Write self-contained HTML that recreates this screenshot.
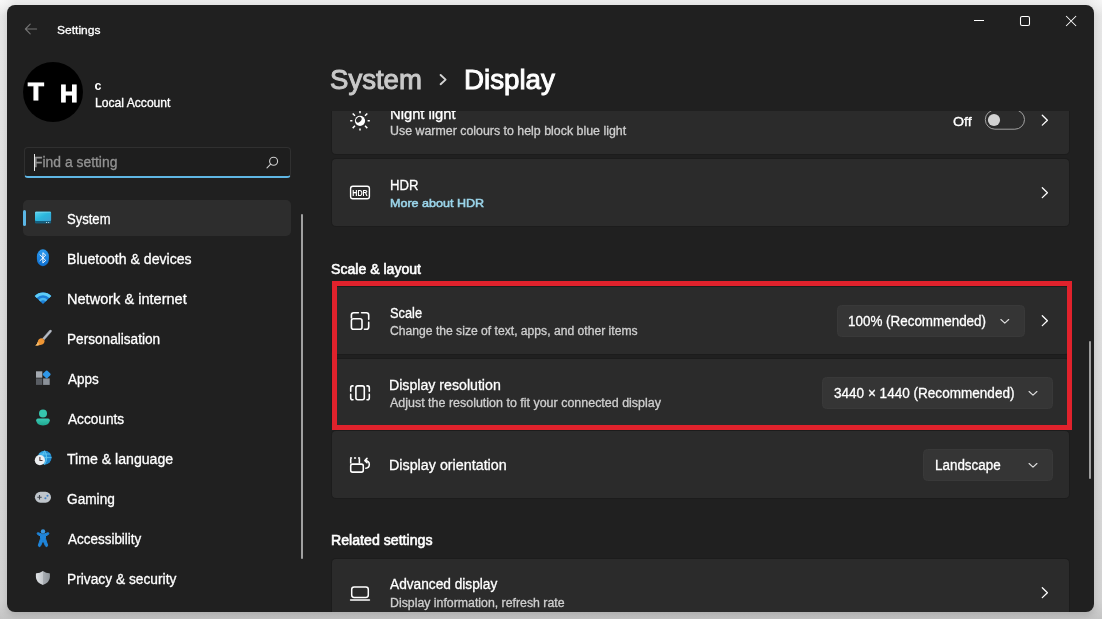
<!DOCTYPE html>
<html lang="en">
<head>
<meta charset="utf-8">
<title>Settings - System - Display</title>
<style>
*{box-sizing:border-box;margin:0;padding:0}
html,body{width:1102px;height:619px;overflow:hidden}
body{position:relative;background:radial-gradient(circle at 0 0,#f8f8f8 0,rgba(248,248,248,0) 16px),radial-gradient(circle at 100% 0,#f6f6f6 0,rgba(246,246,246,0) 16px),linear-gradient(180deg,#ebebeb 0,#e6e6e6 1%,#dedede 50%,#d2d2d2 97%,#c4c4c4 100%);font-family:"Liberation Sans",sans-serif;color:#fff}
#win{position:absolute;left:7px;top:5px;width:1087px;height:606.6px;background:#202020;border-radius:8px;overflow:hidden;box-shadow:0 4px 7px 0 rgba(0,0,0,.13)}
#page{position:absolute;left:-7px;top:-5px;width:1102px;height:619px;will-change:transform}
.t{position:absolute;white-space:pre;transform-origin:0 50%;font-family:"Liberation Sans",sans-serif}
.abs{position:absolute}
.card{position:absolute;left:332px;width:737px;height:66.6px;background:#2b2b2b;box-shadow:0 0 0 1px #1c1c1c;border-radius:4px}
.dd{position:absolute;height:32px;background:#353535;border:1px solid #393939;border-radius:4.5px}
#clip{position:absolute;left:320px;top:111px;width:782px;height:508px;overflow:hidden}
#clipin{position:absolute;left:-320px;top:-111px;width:1102px;height:619px}
svg{position:absolute;overflow:visible}
</style>
</head>
<body>
<div id="win"><div id="page">

<!-- title bar -->
<svg style="left:24px;top:23px" width="14" height="12" viewBox="0 0 14 12"><path d="M6.2 1.2 L1.4 6 L6.2 10.8 M1.6 6 H12.6" fill="none" stroke="#747474" stroke-width="1.1" stroke-linecap="round" stroke-linejoin="round"/></svg>
<svg style="left:0;top:0" width="1102" height="40" viewBox="0 0 1102 40" fill="none" stroke="#fff" stroke-width="1.05">
 <path d="M974 20.5 H984"/>
 <rect x="1020.5" y="16.5" width="9" height="9" rx="1.6"/>
 <path d="M1066.1 16 L1076.1 26 M1076.1 16 L1066.1 26"/>
</svg>

<!-- user -->
<div class="abs" style="left:22.5px;top:62px;width:60px;height:60px;border-radius:50%;background:#000"></div>
<span class="t" style="left:28px;top:78.1px;font-size:23.6px;line-height:28px;font-weight:700;color:#fff;-webkit-text-stroke:1px #fff;transform:scaleX(1.1)">T</span>
<span class="t" style="left:59.8px;top:80.4px;font-size:23.6px;line-height:28px;font-weight:700;color:#fff;-webkit-text-stroke:1px #fff;transform:scaleX(1.04)">H</span>

<!-- search -->
<div class="abs" style="left:23.5px;top:147px;width:267px;height:31px;border-radius:4px;background:#1e1e1e;border:1px solid #303030;border-bottom:2px solid #5fb6e4"></div>
<div class="abs" style="left:34px;top:154px;width:1px;height:17px;background:#e8e8e8"></div>
<svg style="left:266.2px;top:155.6px" width="13" height="13" viewBox="0 0 13 13"><circle cx="7.6" cy="5.2" r="4" fill="none" stroke="#cfcfcf" stroke-width="1.1"/><path d="M4.7 8.1 L1 11.8" stroke="#cfcfcf" stroke-width="1.1" stroke-linecap="round"/></svg>

<!-- nav -->
<div class="abs" style="left:23px;top:200px;width:268px;height:36px;border-radius:5px;background:#2d2d2d"></div>
<div class="abs" style="left:23px;top:210px;width:3px;height:16px;border-radius:2px;background:#5bb7e6"></div>
<div class="abs" style="left:301px;top:214px;width:2.2px;height:344.5px;border-radius:1px;background:#a0a0a0"></div>
<svg style="left:0;top:0" width="70" height="619" viewBox="0 0 70 619">
<defs>
 <linearGradient id="gSys" x1="0" y1="0" x2="1" y2="1"><stop offset="0" stop-color="#5ed2ee"/><stop offset=".5" stop-color="#2bb7dd"/><stop offset="1" stop-color="#3b9fd2"/></linearGradient>
 <linearGradient id="gBt" x1="0" y1="0" x2="0" y2="1"><stop offset="0" stop-color="#2a9af0"/><stop offset="1" stop-color="#0f6fd0"/></linearGradient>
 <linearGradient id="gAcc" x1="0" y1="0" x2="0" y2="1"><stop offset="0" stop-color="#3cc9b4"/><stop offset="1" stop-color="#1ea890"/></linearGradient>
 <linearGradient id="gSh" x1="0" y1="0" x2="1" y2="0"><stop offset="0" stop-color="#e0e3e6"/><stop offset=".5" stop-color="#c4c8cc"/><stop offset=".5" stop-color="#a9aeb3"/><stop offset="1" stop-color="#8f959b"/></linearGradient>
 <linearGradient id="gBr" x1="1" y1="0" x2="0" y2="1"><stop offset="0" stop-color="#b8bcc2"/><stop offset="1" stop-color="#7d8288"/></linearGradient>
</defs>
<!-- System -->
<rect x="35" y="211.7" width="16.1" height="11.8" rx="1.2" fill="#175f7e"/>
<rect x="35" y="211.7" width="16.1" height="9.3" rx="1" fill="url(#gSys)"/>
<rect x="35.3" y="211.7" width="15.5" height=".9" rx=".4" fill="#8fe2f6" opacity=".8"/>
<rect x="46" y="221.9" width="1.1" height="1.1" rx=".5" fill="#d8f2fb"/><rect x="48.1" y="221.9" width="1.1" height="1.1" rx=".5" fill="#d8f2fb"/>
<!-- Bluetooth -->
<rect x="36.9" y="249.3" width="12" height="16.9" rx="6" ry="7.2" fill="url(#gBt)"/>
<path d="M40 254.9 L45.7 260.4 L42.9 262.9 V252.7 L45.7 255.2 L40 260.7" fill="none" stroke="#fff" stroke-width=".95" stroke-linejoin="miter" stroke-linecap="round"/>
<!-- Network -->
<path d="M43 304 L34.7 295.9 A11.8 11.8 0 0 1 51.3 295.9 Z" fill="#1c7fd6"/>
<path d="M34.7 295.9 A11.8 11.8 0 0 1 51.3 295.9 L49.3 297.9 A9 9 0 0 0 36.7 297.9 Z" fill="#5fcdf6"/>
<path d="M38.6 299.7 A6.2 6.2 0 0 1 47.4 299.7 L45.6 301.5 A3.7 3.7 0 0 0 40.4 301.5 Z" fill="#49b6ee"/>
<!-- Personalisation -->
<path d="M50.4 331.2 L43.4 339.2" stroke="#a3a9b3" stroke-width="2.7" stroke-linecap="round" fill="none"/>
<path d="M50.9 330.7 L43.9 338.7" stroke="#c2c7cf" stroke-width=".9" stroke-linecap="round" fill="none"/>
<path d="M41.6 338.3 Q44 338.6 44.6 341 Q44.4 344.6 40.4 345 Q37.4 345.6 35.3 345.5 Q37.6 344 37.8 341.8 Q38.2 338.4 41.6 338.3 Z" fill="#ef9634"/>
<path d="M35.3 345.5 Q37.6 344 37.8 341.8 Q39.4 343.6 38.6 345.3 Q36.8 345.7 35.3 345.5Z" fill="#f8c377"/>
<path d="M42.4 338.4 Q44.3 339 44.6 341 L42.2 338.4Z" fill="#b8641c"/>
<!-- Apps -->
<rect x="36" y="371.3" width="6.3" height="6.4" fill="#a4aab1"/>
<rect x="36" y="378.4" width="6.3" height="6.5" fill="#595d63"/>
<rect x="43.1" y="378.4" width="6.6" height="6.5" fill="#8b9199"/>
<rect x="43.6" y="371.3" width="6.2" height="6.2" rx="1.1" transform="rotate(45 46.7 374.4)" fill="#2f97e8"/>
<!-- Accounts -->
<circle cx="43" cy="413.6" r="4" fill="#36c5ae"/>
<path d="M37.9 418.6 H48.1 Q49.8 418.6 49.8 420.3 Q49.8 425.4 43 425.4 Q36.2 425.4 36.2 420.3 Q36.2 418.6 37.9 418.6Z" fill="url(#gAcc)"/>
<!-- Time & language -->
<circle cx="44.6" cy="457.6" r="6.9" fill="#2a9fe0"/>
<path d="M44.6 450.7 A6.9 6.9 0 0 1 44.6 464.5 Q50 457.6 44.6 450.7Z" fill="#1c7fc4" opacity=".7"/>
<path d="M44.6 450.7 Q40.4 457.6 44.6 464.5 M44.6 450.7 Q48.8 457.6 44.6 464.5 M37.7 457.6 H51.5 M38.8 454 H50.4" fill="none" stroke="#6fd0f4" stroke-width=".7"/>
<circle cx="39.9" cy="460.2" r="5.1" fill="#eceef0"/>
<path d="M39.9 457.3 V460.5 H42.1" fill="none" stroke="#4a3434" stroke-width="1.1" stroke-linecap="round" stroke-linejoin="round"/>
<!-- Gaming -->
<rect x="34.9" y="491.8" width="16.1" height="10.9" rx="5.45" fill="#bfc5cb"/>
<path d="M39.5 495 V499.4 M37.3 497.2 H41.7" stroke="#3f454d" stroke-width="1.1"/>
<circle cx="45.4" cy="498.3" r="1.05" fill="#3f7fc4"/><circle cx="47.5" cy="495.8" r="1.05" fill="#3f7fc4"/>
<!-- Accessibility -->
<circle cx="43" cy="531.5" r="2.2" fill="#3a98e2"/>
<g transform="translate(0.3 0.3)"><path d="M36.9 533.4 Q36.6 532.2 37.9 532.4 L42.7 534.2 L47.5 532.4 Q48.8 532.2 48.5 533.4 Q48.3 534.2 47.6 534.5 L45.2 535.7 V538.4 L47.3 544.8 Q47.6 546 46.5 546.3 Q45.5 546.5 45.1 545.5 L42.7 540.2 L40.3 545.5 Q39.9 546.5 38.9 546.3 Q37.8 546 38.1 544.8 L40.2 538.4 V535.7 L37.8 534.5 Q37.1 534.2 36.9 533.4Z" fill="#1f84d8" stroke="#1f84d8" stroke-width="1" stroke-linejoin="round"/></g>
<!-- Privacy -->
<path d="M42.9 570.9 Q46 573 49.4 573.2 Q49.9 573.2 49.9 573.8 V577 Q49.9 582.3 42.9 585 Q35.9 582.3 35.9 577 V573.8 Q35.9 573.2 36.4 573.2 Q39.8 573 42.9 570.9Z" fill="url(#gSh)"/>
</svg>


<!-- heading chevron -->
<svg style="left:439px;top:74.2px" width="9" height="11" viewBox="0 0 9 11"><path d="M1.6 1 L6.6 5.6 L1.6 10.2" fill="none" stroke="#d4d4d4" stroke-width="1.9" stroke-linecap="round" stroke-linejoin="round"/></svg>

<!-- main scroll content -->
<div id="clip"><div id="clipin">
 <div class="card" style="top:87px"></div>
 <div class="card" style="top:159px"></div>
 <div class="card" style="top:287px"></div>
 <div class="card" style="top:359px"></div>
 <div class="card" style="top:431px"></div>
 <div class="card" style="top:559px"></div>
 <div class="dd" style="left:837px;top:305px;width:188px"></div>
 <div class="dd" style="left:822px;top:377px;width:231px"></div>
 <div class="dd" style="left:923px;top:449px;width:130px"></div>
 <span class="t" style="left:389.75px;top:104.5px;font-size:14px;line-height:18px;font-weight:400;color:#fff;-webkit-text-stroke:0.3px #fff;transform:scaleX(1.0537)">Night light</span>
<span class="t" style="left:389.73px;top:123.4px;font-size:12px;line-height:16px;font-weight:400;color:#cfcfcf;-webkit-text-stroke:0.3px #cfcfcf;transform:scaleX(1.0322)">Use warmer colours to help block blue light</span>
 <svg style="left:0;top:0" width="1102" height="619" viewBox="0 0 1102 619" fill="none" stroke="#fff" stroke-linecap="round" stroke-linejoin="round">
<!-- night light -->
<g transform="translate(360 120.8)">
 <circle r="5.1" fill="#fff" stroke="none"/>
 <ellipse cx="-1.2" cy="-1.1" rx="3.2" ry="2.3" transform="rotate(-45 -1.2 -1.1)" fill="#2b2b2b" stroke="none"/>
 <g stroke-width="1.5" stroke-linecap="butt"><path d="M0 -7.6 V-9.8 M0 7.6 V9.8 M-7.6 0 H-9.8 M7.6 0 H9.8 M5 -5 L7.3 -7.3 M-5 -5 L-7.3 -7.3 M5 5 L7.3 7.3 M-5 5 L-7.3 7.3"/></g>
</g>
<!-- toggle -->
<rect x="985.3" y="110" width="39.2" height="19.2" rx="9.6" stroke="#a2a2a2" stroke-width="1"/>
<circle cx="994" cy="120" r="6.1" fill="#d2d2d2" stroke="none"/>
<!-- chevrons right -->
<g stroke-width="1.3"><path d="M1042.3 115.3 L1047.4 120.2 L1042.3 125.1"/><path d="M1042.3 187.8 L1047.4 192.7 L1042.3 197.6"/><path d="M1042.3 315.8 L1047.4 320.7 L1042.3 325.6"/><path d="M1042.3 587.8 L1047.4 592.7 L1042.3 597.6"/></g>
<!-- dropdown chevrons -->
<g stroke="#dcdcdc" stroke-width="1.15"><path d="M1000.9 319.5 L1004.8 323.2 L1008.7 319.5"/><path d="M1029.1 391.5 L1033 395.2 L1036.9 391.5"/><path d="M1029.1 463.5 L1033 467.2 L1036.9 463.5"/></g>
<!-- HDR icon -->
<rect x="350.6" y="186.2" width="18.8" height="12.6" rx="2.2" stroke-width="1.4"/>
<text x="360" y="196.1" font-family="Liberation Sans, sans-serif" font-weight="700" font-size="9.4" text-anchor="middle" fill="#fff" stroke="none" textLength="15.4" lengthAdjust="spacingAndGlyphs">HDR</text>
<!-- scale icon -->
<g stroke-width="1.6">
 <rect x="351.4" y="318.7" width="10.6" height="10.6" rx="2"/>
 <path d="M351.4 318 V315 Q351.4 312.7 353.7 312.7 H358.4 M361.6 312.7 H366.4 Q368.7 312.7 368.7 315 V319.2 M368.7 322.4 V327 Q368.7 329.3 366.4 329.3 H364.4"/>
</g>
<!-- resolution icon -->
<g stroke-width="1.6">
 <rect x="355.9" y="385.9" width="8.4" height="13.8" rx="2"/>
 <path d="M353 385.9 H352.4 Q350.7 385.9 350.7 387.9 V391.2 M350.7 394.4 V397.7 Q350.7 399.7 352.4 399.7 H353"/>
 <path d="M367 385.9 H367.6 Q369.3 385.9 369.3 387.9 V391.2 M369.3 394.4 V397.7 Q369.3 399.7 367.6 399.7 H367"/>
</g>
<!-- orientation icon -->
<g stroke-width="1.55">
 <rect x="350.7" y="464.1" width="12.6" height="8" rx="1.8"/>
 <path d="M350.7 463.4 V458.6 M359.4 463.4 V458.6" stroke-linecap="butt"/><path d="M350 458 H360.1" stroke-dasharray="2.1 1.9" stroke-linecap="butt"/>
 <path d="M365.4 460.6 Q369.3 461 369.3 464.4 Q369.3 467.8 365.8 468.2"/>
 <path d="M367 458.4 L364.9 460.6 L367 462.6" />
</g>
<!-- advanced display icon -->
<g stroke-width="1.5">
 <rect x="351.7" y="587" width="16.6" height="10.4" rx="2.4"/>
 <path d="M350.6 600 H369.4" stroke-width="1.6"/>
</g>
</svg>

 <!-- red highlight -->
 <div class="abs" style="left:331.7px;top:280.5px;width:740.3px;height:149.4px;border:5.5px solid #e0222c"></div>
</div></div>
<!-- main scrollbar -->
<div class="abs" style="left:1089.2px;top:340.5px;width:2.2px;height:138px;border-radius:1px;background:#9d9d9d"></div>

<span class="t" style="left:56.94px;top:22.7px;font-size:11.4px;line-height:15px;font-weight:400;color:#fff;-webkit-text-stroke:0.3px #fff;transform:scaleX(1.0552)">Settings</span>
<span class="t" style="left:94.50px;top:78.0px;font-size:12.5px;line-height:16px;font-weight:700;color:#fff;-webkit-text-stroke:0px #fff;transform:scaleX(1.0000)">c</span>
<span class="t" style="left:94.74px;top:95.0px;font-size:12px;line-height:16px;font-weight:400;color:#fff;-webkit-text-stroke:0.3px #fff;transform:scaleX(1.0101)">Local Account</span>
<span class="t" style="left:34.21px;top:152.8px;font-size:14px;line-height:18px;font-weight:400;color:#939393;-webkit-text-stroke:0.3px #939393;transform:scaleX(0.9921)">Find a setting</span>
<span class="t" style="left:67.33px;top:210.0px;font-size:14px;line-height:18px;font-weight:400;color:#fff;-webkit-text-stroke:0.3px #fff;transform:scaleX(0.9319)">System</span>
<span class="t" style="left:66.79px;top:250.0px;font-size:14px;line-height:18px;font-weight:400;color:#fff;-webkit-text-stroke:0.3px #fff;transform:scaleX(1.0073)">Bluetooth &amp; devices</span>
<span class="t" style="left:66.76px;top:290.0px;font-size:14px;line-height:18px;font-weight:400;color:#fff;-webkit-text-stroke:0.3px #fff;transform:scaleX(1.0398)">Network &amp; internet</span>
<span class="t" style="left:66.83px;top:330.0px;font-size:14px;line-height:18px;font-weight:400;color:#fff;-webkit-text-stroke:0.3px #fff;transform:scaleX(0.9723)">Personalisation</span>
<span class="t" style="left:67.54px;top:370.0px;font-size:14px;line-height:18px;font-weight:400;color:#fff;-webkit-text-stroke:0.3px #fff;transform:scaleX(0.9625)">Apps</span>
<span class="t" style="left:67.54px;top:410.0px;font-size:14px;line-height:18px;font-weight:400;color:#fff;-webkit-text-stroke:0.3px #fff;transform:scaleX(0.9757)">Accounts</span>
<span class="t" style="left:67.30px;top:450.0px;font-size:14px;line-height:18px;font-weight:400;color:#fff;-webkit-text-stroke:0.3px #fff;transform:scaleX(1.0076)">Time &amp; language</span>
<span class="t" style="left:67.31px;top:490.0px;font-size:14px;line-height:18px;font-weight:400;color:#fff;-webkit-text-stroke:0.3px #fff;transform:scaleX(0.9759)">Gaming</span>
<span class="t" style="left:67.54px;top:530.0px;font-size:14px;line-height:18px;font-weight:400;color:#fff;-webkit-text-stroke:0.3px #fff;transform:scaleX(0.9616)">Accessibility</span>
<span class="t" style="left:66.82px;top:570.0px;font-size:14px;line-height:18px;font-weight:400;color:#fff;-webkit-text-stroke:0.3px #fff;transform:scaleX(0.9828)">Privacy &amp; security</span>
<span class="t" style="left:330.27px;top:61.0px;font-size:28.4px;line-height:37px;font-weight:400;color:#c9c9c9;-webkit-text-stroke:1.0px #c9c9c9;transform:scaleX(0.9708)">System</span>
<span class="t" style="left:463.99px;top:61.0px;font-size:28.4px;line-height:37px;font-weight:400;color:#fff;-webkit-text-stroke:1.0px #fff;transform:scaleX(0.9761)">Display</span>
<span class="t" style="left:330.75px;top:259.6px;font-size:14px;line-height:18px;font-weight:400;color:#fff;-webkit-text-stroke:0.59px #fff;transform:scaleX(1.0056)">Scale &amp; layout</span>
<span class="t" style="left:331.44px;top:531.3px;font-size:14px;line-height:18px;font-weight:400;color:#fff;-webkit-text-stroke:0.59px #fff;transform:scaleX(1.0111)">Related settings</span>
<span class="t" style="left:389.76px;top:176.0px;font-size:14px;line-height:18px;font-weight:400;color:#fff;-webkit-text-stroke:0.3px #fff;transform:scaleX(0.9379)">HDR</span>
<span class="t" style="left:390.15px;top:195.7px;font-size:11.4px;line-height:15px;font-weight:400;color:#9bd5ea;-webkit-text-stroke:0.52px #9bd5ea;transform:scaleX(1.1012)">More about HDR</span>
<span class="t" style="left:389.84px;top:303.8px;font-size:14px;line-height:18px;font-weight:400;color:#fff;-webkit-text-stroke:0.3px #fff;transform:scaleX(0.9139)">Scale</span>
<span class="t" style="left:389.99px;top:323.0px;font-size:12px;line-height:16px;font-weight:400;color:#cfcfcf;-webkit-text-stroke:0.3px #cfcfcf;transform:scaleX(1.0113)">Change the size of text, apps, and other items</span>
<span class="t" style="left:389.49px;top:376.0px;font-size:14px;line-height:18px;font-weight:400;color:#fff;-webkit-text-stroke:0.3px #fff;transform:scaleX(1.0115)">Display resolution</span>
<span class="t" style="left:390.16px;top:395.0px;font-size:12px;line-height:16px;font-weight:400;color:#cfcfcf;-webkit-text-stroke:0.3px #cfcfcf;transform:scaleX(1.0389)">Adjust the resolution to fit your connected display</span>
<span class="t" style="left:389.48px;top:455.6px;font-size:14px;line-height:18px;font-weight:400;color:#fff;-webkit-text-stroke:0.3px #fff;transform:scaleX(1.0220)">Display orientation</span>
<span class="t" style="left:390.14px;top:575.4px;font-size:14px;line-height:18px;font-weight:400;color:#fff;-webkit-text-stroke:0.3px #fff;transform:scaleX(0.9778)">Advanced display</span>
<span class="t" style="left:389.73px;top:595.0px;font-size:12px;line-height:16px;font-weight:400;color:#cfcfcf;-webkit-text-stroke:0.3px #cfcfcf;transform:scaleX(1.0266)">Display information, refresh rate</span>
<span class="t" style="left:953.27px;top:112.5px;font-size:13.4px;line-height:17px;font-weight:400;color:#fff;-webkit-text-stroke:0.3px #fff;transform:scaleX(1.0609)">Off</span>
<span class="t" style="left:848.28px;top:311.5px;font-size:14px;line-height:18px;font-weight:400;color:#fff;-webkit-text-stroke:0.3px #fff;transform:scaleX(0.9586)">100% (Recommended)</span>
<span class="t" style="left:833.76px;top:383.5px;font-size:14px;line-height:18px;font-weight:400;color:#fff;-webkit-text-stroke:0.3px #fff;transform:scaleX(0.9682)">3440 × 1440 (Recommended)</span>
<span class="t" style="left:934.54px;top:455.5px;font-size:14px;line-height:18px;font-weight:400;color:#fff;-webkit-text-stroke:0.3px #fff;transform:scaleX(0.9582)">Landscape</span>
</div></div>
</body>
</html>
